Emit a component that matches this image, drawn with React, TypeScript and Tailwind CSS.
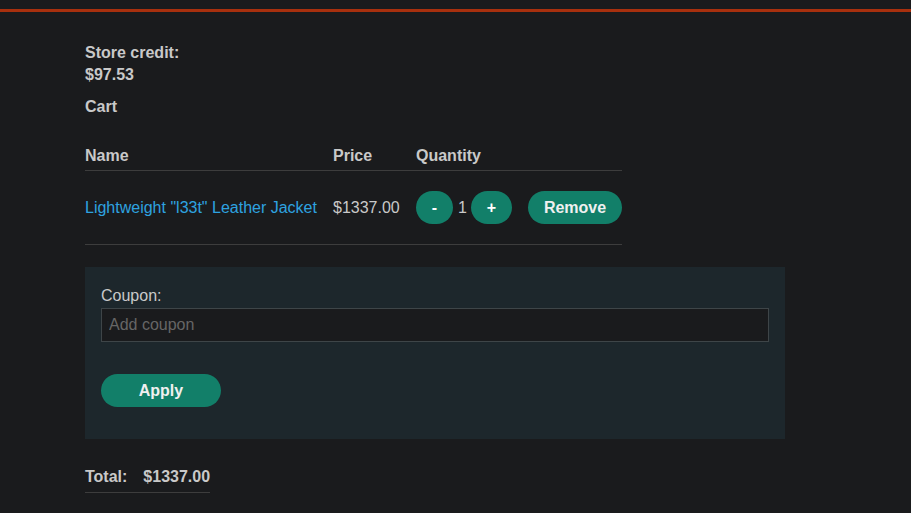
export default function App() {
  return (
    <div className="min-h-screen bg-[#1a1b1d] text-[#c9c9c9] font-['Liberation_Sans',Arial,sans-serif] text-base">
      <div className="pt-[9px]">
        <div className="h-[3px] bg-[#a8300e]" />
      </div>
      <div className="pl-[85px] pt-[30px] pb-10">
        <div className="font-bold leading-[22px]">
          <div>Store credit:</div>
          <div>$97.53</div>
        </div>
        <div className="mt-[10px] font-bold leading-[22px]">Cart</div>

        <div className="mt-[27px] w-[537px]">
          <div className="grid grid-cols-[248px_83px_112px_94px] font-bold leading-[22px] pb-[3px] border-b border-[#3d3d3d]">
            <div>Name</div>
            <div>Price</div>
            <div>Quantity</div>
            <div />
          </div>
          <div className="grid grid-cols-[248px_83px_112px_94px] items-center h-[74px] border-b border-[#3d3d3d]">
            <a href="#" className="text-[#2ea3e0]">Lightweight "l33t" Leather Jacket</a>
            <div>$1337.00</div>
            <div className="flex items-center">
              <button className="w-[37px] h-[33px] rounded-full bg-[#127f69] text-white font-bold">-</button>
              <span className="ml-[5px] mr-[4px]">1</span>
              <button className="w-[41px] h-[33px] rounded-full bg-[#127f69] text-white font-bold">+</button>
            </div>
            <button className="w-[94px] h-[33px] rounded-full bg-[#127f69] text-[#f0f0f0] font-bold">Remove</button>
          </div>
        </div>

        <div className="mt-[22px] w-[700px] bg-[#1d272c] px-4 pt-[20px] pb-[32px]">
          <label className="block leading-[18px]">Coupon:</label>
          <input
            placeholder="Add coupon"
            className="mt-[3px] block w-full h-[34px] bg-[#1a1b1d] border border-[#3e4548] px-[7px] text-[#c9c9c9] placeholder:text-[#666] outline-none"
          />
          <button className="mt-[32px] w-[120px] h-[33px] rounded-full bg-[#127f69] text-[#f0f0f0] font-bold">Apply</button>
        </div>

        <div className="mt-[27px] inline-flex gap-4 font-bold leading-[22px] pb-[4px] border-b border-[#3d3d3d]">
          <span>Total:</span>
          <span>$1337.00</span>
        </div>
      </div>
    </div>
  );
}
